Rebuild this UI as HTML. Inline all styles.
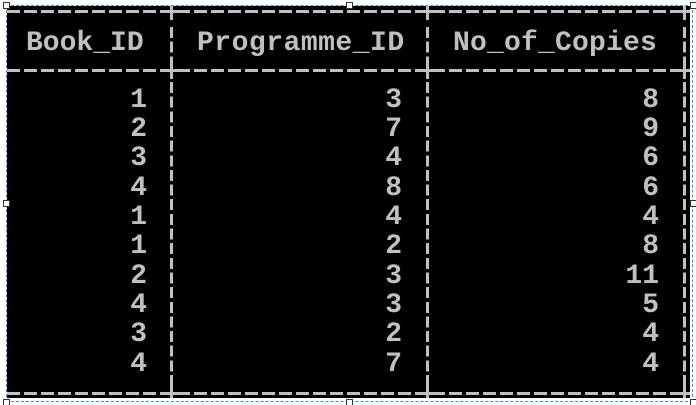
<!DOCTYPE html>
<html><head><meta charset="utf-8"><style>
html,body{margin:0;padding:0;background:#fff;width:696px;height:405px;overflow:hidden;position:relative}
#con{position:absolute;left:7px;top:6px;width:683px;height:392px;background:#000;overflow:hidden}
.t{position:absolute;font-family:"Liberation Mono",monospace;font-weight:bold;font-size:28px;line-height:29px;color:#c0c0c0;white-space:pre}
.r{text-align:right;width:200px}
.h{position:absolute;left:0;width:683px;height:3px;background:repeating-linear-gradient(90deg,#c0c0c0 0 13px,transparent 13px 17px)}
.v{position:absolute;width:3px;background:repeating-linear-gradient(180deg,#c0c0c0 0 11px,transparent 11px 14.65px)}
.p{position:absolute;width:3px;height:17px;background:#c0c0c0}
.ph{position:absolute;width:15px;height:3px;background:#c0c0c0}
.sel{position:absolute;left:6px;top:5px;width:687px;height:397px;border:1px dashed #3a8ee6;box-sizing:border-box}
.hd{position:absolute;width:5px;height:5px;border:1px solid #333;background:#fff}
</style></head><body>
<div id="con">
<div class="h" style="top:4px"></div>
<div class="h" style="top:63px"></div>
<div class="h" style="top:386px"></div>
<div class="v" style="left:163px;top:21px;height:38px"></div>
<div class="v" style="left:419px;top:21px;height:38px"></div>
<div class="v" style="left:676px;top:21px;height:38px"></div>
<div class="v" style="left:163px;top:76px;height:306px"></div>
<div class="v" style="left:419px;top:76px;height:306px"></div>
<div class="v" style="left:676px;top:76px;height:306px"></div>
<div class="p" style="left:163px;top:-3px"></div><div class="ph" style="left:157px;top:4px"></div>
<div class="p" style="left:419px;top:-3px"></div><div class="ph" style="left:413px;top:4px"></div>
<div class="p" style="left:676px;top:-3px"></div><div class="ph" style="left:670px;top:4px"></div>
<div class="p" style="left:163px;top:56px"></div><div class="ph" style="left:157px;top:63px"></div>
<div class="p" style="left:419px;top:56px"></div><div class="ph" style="left:413px;top:63px"></div>
<div class="p" style="left:676px;top:56px"></div><div class="ph" style="left:670px;top:63px"></div>
<div class="p" style="left:163px;top:379px"></div><div class="ph" style="left:157px;top:386px"></div>
<div class="p" style="left:419px;top:379px"></div><div class="ph" style="left:413px;top:386px"></div>
<div class="p" style="left:676px;top:379px"></div><div class="ph" style="left:670px;top:386px"></div>
<div class="t" style="left:19px;top:23px">Book_ID</div>
<div class="t" style="left:190px;top:23px;letter-spacing:0.5px">Programme_ID</div>
<div class="t" style="left:446px;top:23px;letter-spacing:0.2px">No_of_Copies</div>
<div class="t r" style="left:-60px;top:79.5px;line-height:29.35px">1
2
3
4
1
1
2
4
3
4</div>
<div class="t r" style="left:195px;top:79.5px;line-height:29.35px">3
7
4
8
4
2
3
3
2
7</div>
<div class="t r" style="left:452px;top:79.5px;line-height:29.35px">8
9
6
6
4
8
11
5
4
4</div>
</div>
<div class="sel"></div>
<div class="hd" style="left:3px;top:2px"></div>
<div class="hd" style="left:346px;top:2px"></div>
<div class="hd" style="left:690px;top:2px"></div>
<div class="hd" style="left:3px;top:200px"></div>
<div class="hd" style="left:690px;top:200px"></div>
<div class="hd" style="left:3px;top:399px"></div>
<div class="hd" style="left:346px;top:399px"></div>
<div class="hd" style="left:690px;top:399px"></div>
</body></html>
